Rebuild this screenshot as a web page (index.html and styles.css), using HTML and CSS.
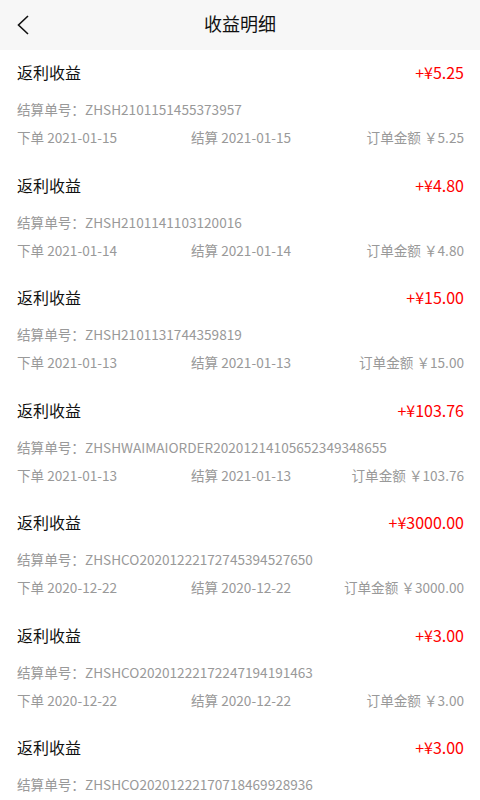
FILE: index.html
```html
<!DOCTYPE html>
<html lang="zh-CN">
<head>
    <meta charset="UTF-8">
    <meta name="viewport" content="width=device-width, initial-scale=1.0">
    <title>收益明细</title>
    <link rel="stylesheet" href="styles.css">
</head>
<body>
    <header class="topbar">
        <span class="back">
            <svg width="14" height="20" viewBox="0 0 14 20"><path d="M12 1 L2.5 10 L12 19" fill="none" stroke="#111" stroke-width="1.6"/></svg>
        </span>
        <h1 class="title">收益明细</h1>
    </header>

    <ul class="list">
        <li class="item">
            <div class="row-top"><span class="name">返利收益</span><span class="amount">+¥5.25</span></div>
            <div class="order-no">结算单号：ZHSH2101151455373957</div>
            <div class="row-date"><span>下单 2021-01-15</span><span>结算 2021-01-15</span><span class="total">订单金额 ￥5.25</span></div>
        </li>
        <li class="item">
            <div class="row-top"><span class="name">返利收益</span><span class="amount">+¥4.80</span></div>
            <div class="order-no">结算单号：ZHSH2101141103120016</div>
            <div class="row-date"><span>下单 2021-01-14</span><span>结算 2021-01-14</span><span class="total">订单金额 ￥4.80</span></div>
        </li>
        <li class="item">
            <div class="row-top"><span class="name">返利收益</span><span class="amount">+¥15.00</span></div>
            <div class="order-no">结算单号：ZHSH2101131744359819</div>
            <div class="row-date"><span>下单 2021-01-13</span><span>结算 2021-01-13</span><span class="total">订单金额 ￥15.00</span></div>
        </li>
        <li class="item">
            <div class="row-top"><span class="name">返利收益</span><span class="amount">+¥103.76</span></div>
            <div class="order-no">结算单号：ZHSHWAIMAIORDER20201214105652349348655</div>
            <div class="row-date"><span>下单 2021-01-13</span><span>结算 2021-01-13</span><span class="total">订单金额 ￥103.76</span></div>
        </li>
        <li class="item">
            <div class="row-top"><span class="name">返利收益</span><span class="amount">+¥3000.00</span></div>
            <div class="order-no">结算单号：ZHSHCO20201222172745394527650</div>
            <div class="row-date"><span>下单 2020-12-22</span><span>结算 2020-12-22</span><span class="total">订单金额 ￥3000.00</span></div>
        </li>
        <li class="item">
            <div class="row-top"><span class="name">返利收益</span><span class="amount">+¥3.00</span></div>
            <div class="order-no">结算单号：ZHSHCO20201222172247194191463</div>
            <div class="row-date"><span>下单 2020-12-22</span><span>结算 2020-12-22</span><span class="total">订单金额 ￥3.00</span></div>
        </li>
        <li class="item">
            <div class="row-top"><span class="name">返利收益</span><span class="amount">+¥3.00</span></div>
            <div class="order-no">结算单号：ZHSHCO20201222170718469928936</div>
        </li>
    </ul>
</body>
</html>
```

FILE: styles.css
```css
html, body {
    margin: 0;
    padding: 0;
    height: 800px;
    overflow: hidden;
}

body {
    font-family: "Noto Sans CJK SC", "Noto Sans", sans-serif;
    background-color: #fff;
    color: #222;
}

.topbar {
    height: 50px;
    box-sizing: border-box;
    padding-bottom: 4px;
    background-color: #f7f7f7;
    display: flex;
    align-items: center;
    justify-content: center;
    position: relative;
}

.back {
    position: absolute;
    left: 16px;
    top: 15px;
    display: flex;
}

.title {
    margin: 0;
    font-size: 18px;
    font-weight: normal;
    color: #111;
}

.list {
    list-style: none;
    margin: 0;
    padding: 0;
}

.item {
    padding: 9px 16px 11.5px 17px;
}

.row-top {
    display: flex;
    justify-content: space-between;
    align-items: center;
    height: 26px;
    font-size: 16px;
}

.name {
    color: #111;
}

.amount {
    color: #f00;
}

.order-no {
    margin-top: 10px;
    height: 28px;
    line-height: 28px;
    font-size: 13.6px;
    color: #999;
    white-space: nowrap;
}

.row-date {
    display: grid;
    grid-template-columns: 174px 1fr auto;
    height: 28px;
    line-height: 28px;
    font-size: 13.6px;
    color: #999;
}

.total {
    text-align: right;
}
```
